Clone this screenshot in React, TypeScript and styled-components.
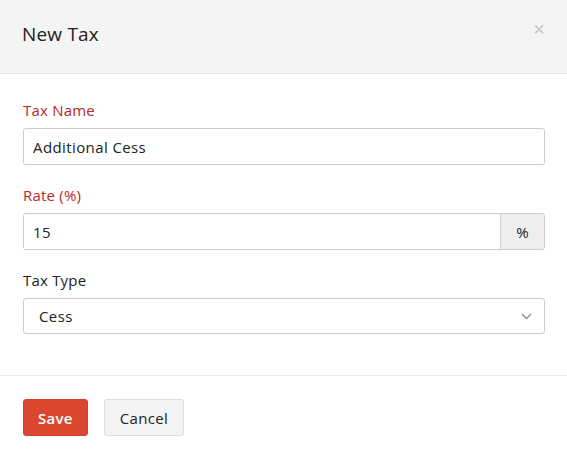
import React from 'react';
import styled, { createGlobalStyle } from 'styled-components';

const GlobalStyle = createGlobalStyle`
  html, body {
    margin: 0;
    padding: 0;
    background: #ffffff;
    font-family: "Open Sans", "Liberation Sans", sans-serif;
    color: #222;
  }
`;

const Modal = styled.div`
  width: 567px;
  height: 461px;
  background: #fff;
  display: flex;
  flex-direction: column;
`;

const Header = styled.div`
  height: 74px;
  background: #f4f4f4;
  border-bottom: 1px solid #e6e6e6;
  display: flex;
  align-items: center;
  justify-content: space-between;
  padding: 0 22px 0 23px;
  box-sizing: border-box;
`;

const Title = styled.h4`
  margin: 0 0 6px -1px;
  font-size: 19px;
  font-weight: 400;
  letter-spacing: 0.2px;
  color: #222;
`;

const Close = styled.button`
  border: none;
  background: none;
  padding: 0;
  margin-top: -15px;
  font-size: 20px;
  line-height: 1;
  color: #c4c4c4;
  cursor: pointer;
  font-family: "Liberation Sans", sans-serif;
`;

const Body = styled.div`
  padding: 26px 22px 0 23px;
  display: flex;
  flex-direction: column;
  gap: 20px;
  height: 302px;
  box-sizing: border-box;
  border-bottom: 1px solid #ececec;
`;

const Field = styled.div`
  display: flex;
  flex-direction: column;
  gap: 8px;
`;

const Label = styled.label<{ required?: boolean }>`
  font-size: 15px;
  line-height: 20px;
  letter-spacing: 0.2px;
  color: ${(p) => (p.required ? '#b8292a' : '#222')};
`;

const InputGroup = styled.div`
  display: flex;
  height: 37px;
  border: 1px solid #ccc;
  border-radius: 3px;
  box-sizing: border-box;
  overflow: hidden;
`;

const Input = styled.input`
  flex: 1;
  border: none;
  outline: none;
  padding: 0 9px;
  font-family: inherit;
  font-size: 15px;
  letter-spacing: 0.4px;
  color: #222;
  min-width: 0;
`;

const Addon = styled.span`
  width: 43px;
  display: flex;
  align-items: center;
  justify-content: center;
  background: #eee;
  border-left: 1px solid #ccc;
  font-size: 15px;
  color: #222;
`;

const SelectBox = styled.div`
  height: 36px;
  border: 1px solid #ccc;
  border-radius: 3px;
  box-sizing: border-box;
  display: flex;
  align-items: center;
  justify-content: space-between;
  padding: 0 12px 0 15px;
  font-size: 15px;
  letter-spacing: 0.4px;
  color: #222;
`;

const Footer = styled.div`
  padding: 23px 23px;
  display: flex;
  gap: 16px;
`;

const Button = styled.button<{ primary?: boolean }>`
  height: 37px;
  padding: 0 ${(p) => (p.primary ? '14px' : '15px')};
  border-radius: 3px;
  font-family: inherit;
  font-size: 15px;
  letter-spacing: 0.3px;
  cursor: pointer;
  border: 1px solid ${(p) => (p.primary ? '#d5402a' : '#dcdcdc')};
  background: ${(p) => (p.primary ? '#d9472f' : '#f4f4f4')};
  color: ${(p) => (p.primary ? '#fff' : '#222')};
  font-weight: ${(p) => (p.primary ? 600 : 400)};
`;

export default function App() {
  return (
    <>
      <GlobalStyle />
      <Modal>
        <Header>
          <Title>New Tax</Title>
          <Close aria-label="Close">×</Close>
        </Header>
        <Body>
          <Field>
            <Label required>Tax Name</Label>
            <InputGroup>
              <Input defaultValue="Additional Cess" />
            </InputGroup>
          </Field>
          <Field>
            <Label required>Rate (%)</Label>
            <InputGroup>
              <Input defaultValue="15" />
              <Addon>%</Addon>
            </InputGroup>
          </Field>
          <Field>
            <Label>Tax Type</Label>
            <SelectBox>
              <span>Cess</span>
              <svg width="11" height="7" viewBox="0 0 11 7" fill="none">
                <path d="M1 1l4.5 4.5L10 1" stroke="#888" strokeWidth="1.4" />
              </svg>
            </SelectBox>
          </Field>
        </Body>
        <Footer>
          <Button primary>Save</Button>
          <Button>Cancel</Button>
        </Footer>
      </Modal>
    </>
  );
}
